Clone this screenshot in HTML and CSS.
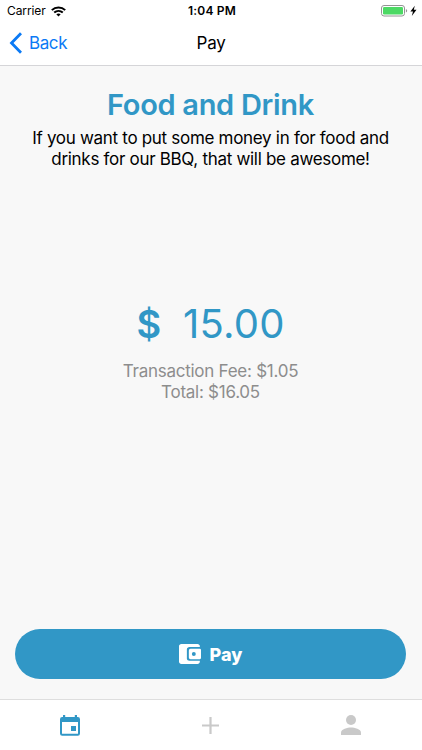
FILE: index.html
```html
<!DOCTYPE html>
<html lang="en">
<head>
<meta charset="utf-8">
<title>Pay</title>
<link rel="stylesheet" href="styles.css">
</head>
<body>
<div class="app">
  <header class="header">
    <div class="status">
      <div class="status-left">
        <span class="carrier">Carrier</span>
        <svg class="wifi" width="15" height="11" viewBox="0 0 15 11" fill="none" stroke="#000" stroke-width="2">
          <path d="M.8 4.1C4.5.5 10.500.5 14.200 4.100M3.200 6.600C5.700 4.300 9.300 4.300 11.800 6.600"/>
          <path d="M5.300 8.300Q7.500 6.700 9.700 8.300L7.500 10.600Z" fill="#000" stroke="none"/>
        </svg>
      </div>
      <span class="time">1:04 PM</span>
      <div class="status-right">
        <svg width="36" height="12" viewBox="0 0 36 12">
          <rect x=".5" y=".5" width="23" height="10.500" rx="2.500" fill="#fff" stroke="#949494"/>
          <rect x="2" y="2" width="20" height="7.500" rx="1.200" fill="#4cd964"/>
          <path d="M24.900 4v3.500q1.300-.4 1.300-1.750T24.900 4Z" fill="#949494"/>
          <path d="M33.800 .8 29.400 6.500h2.600l-1.200 4.500 4.700-6.200h-2.700Z" fill="#000"/>
        </svg>
      </div>
    </div>
    <nav class="nav">
      <a class="back">
        <svg width="13" height="22" viewBox="0 0 13 22" fill="none" stroke="#0b7af5" stroke-width="2.800"><path d="M12 1.200 2.500 11l9.500 9.800"/></svg>
        <span>Back</span>
      </a>
      <span class="nav-title">Pay</span>
    </nav>
  </header>
  <main class="content">
    <h1 class="title">Food and Drink</h1>
    <p class="description"><span class="line-one">If you want to put some money in for food and</span><br><span class="line-two">drinks for our BBQ, that will be awesome!</span></p>
    <div class="amount"><span class="currency">$</span><span class="value">15.00</span></div>
    <div class="fees"><div class="fee">Transaction Fee: $1.05</div><div class="total">Total: $16.05</div></div>
    <button class="pay">
      <svg width="22" height="20" viewBox="3 3 19 18" preserveAspectRatio="none" fill="#fff">
        <path d="M21 18v1c0 1.100-.9 2-2 2H5c-1.100 0-2-.9-2-2V5c0-1.100.9-2 2-2h14c1.100 0 2 .9 2 2v.8h-9c-1.100 0-2.200.9-2.200 2v8.400c0 1.100 1.100 1.800 2.200 1.800Z"/>
        <path fill-rule="evenodd" d="M13 7.300h8q1 0 1 1v7.400q0 1-1 1h-8q-1.500 0-1.500-1.500V8.800q0-1.500 1.500-1.500Zm2.800 3a1.700 1.700 0 1 0 0 3.400 1.700 1.700 0 0 0 0-3.400Z"/>
      </svg>
      <span>Pay</span>
    </button>
  </main>
  <footer class="tabs">
    <div class="tab">
      <svg width="20" height="21" viewBox="0 0 20 21" fill="#3197c6">
        <path fill-rule="evenodd" d="M3 0h2.200v2h9.600V0H17v2h.8Q20 2 20 4.200v14.300q0 2.200-2.200 2.200H2.200Q0 20.700 0 18.500V4.200Q0 2 2.200 2H3ZM2 7v11.700h16V7Z"/>
        <rect x="11" y="11" width="5" height="5"/>
      </svg>
    </div>
    <div class="tab">
      <svg width="17" height="17" viewBox="0 0 17 17" stroke="#c9c9c9" stroke-width="2.200"><path d="M0 8.500h17M8.500 0v17"/></svg>
    </div>
    <div class="tab">
      <svg class="person" width="20" height="20" viewBox="0 0 20 20" fill="#c9c9c9"><circle cx="10" cy="5" r="5"/><path d="M0 20v-2.500C0 14.300 6.500 12.500 10 12.500s10 1.800 10 5V20Z"/></svg>
    </div>
  </footer>
</div>
</body>
</html>
```
FILE: styles.css
```css
* { box-sizing: border-box; }
body { margin: 0; font-family: Inter, "Liberation Sans", sans-serif; }
.app { width: 422px; height: 750px; display: flex; flex-direction: column; background: #f8f8f8; overflow: hidden; white-space: nowrap; }
.header { height: 66px; background: #fff; border-bottom: 1px solid #d5d5d8; }
.status { height: 21px; display: grid; grid-template-columns: 1fr auto 1fr; align-items: center; padding: 1px 5px 0 7px; font-size: 12px; line-height: 20px; }
.status-left { display: flex; align-items: center; gap: 5px; }
.carrier { letter-spacing: -.1px; }
.time { font-weight: 600; letter-spacing: .2px; }
.status-right { display: flex; justify-content: flex-end; }
.nav { height: 44px; display: grid; grid-template-columns: 1fr auto 1fr; align-items: center; padding: 0 9px; font-size: 17px; }
.back { display: flex; align-items: center; gap: 7px; color: #0b7af5; letter-spacing: -.4px; }
.nav-title { letter-spacing: -.3px; }
.content { flex: 1; display: flex; flex-direction: column; align-items: center; padding: 22px 16px 20px 15px; }
.title { margin: 0; color: #3197c6; font-size: 29px; font-weight: 600; line-height: 34px; letter-spacing: -.3px; }
.description { margin: 6px 0 0; font-size: 17px; line-height: 21px; text-align: center; }
.line-one, .line-two { letter-spacing: -.3px; }
.amount { display: flex; align-items: center; gap: 22px; height: 50px; margin-top: 129px; color: #3197c6; line-height: 50px; }
.currency { font-size: 38px; font-weight: 600; }
.value { font-size: 40px; letter-spacing: .2px; }
.fees { margin-top: 12px; color: #8d8d8d; font-size: 17px; line-height: 21px; text-align: center; letter-spacing: -.26px; }
.pay { width: 391px; height: 50px; margin: auto 0 0; padding: 0; border: 0; border-radius: 25px; display: flex; align-items: center; justify-content: center; gap: 9px; background: #3197c6; color: #fff; font: 800 18px Inter, sans-serif; }
.tabs { height: 51px; display: grid; grid-template-columns: repeat(3, 1fr); background: #fff; border-top: 1px solid #dedede; }
.tab { display: flex; align-items: center; justify-content: center; }
.person { margin-right: 1px; }
```
